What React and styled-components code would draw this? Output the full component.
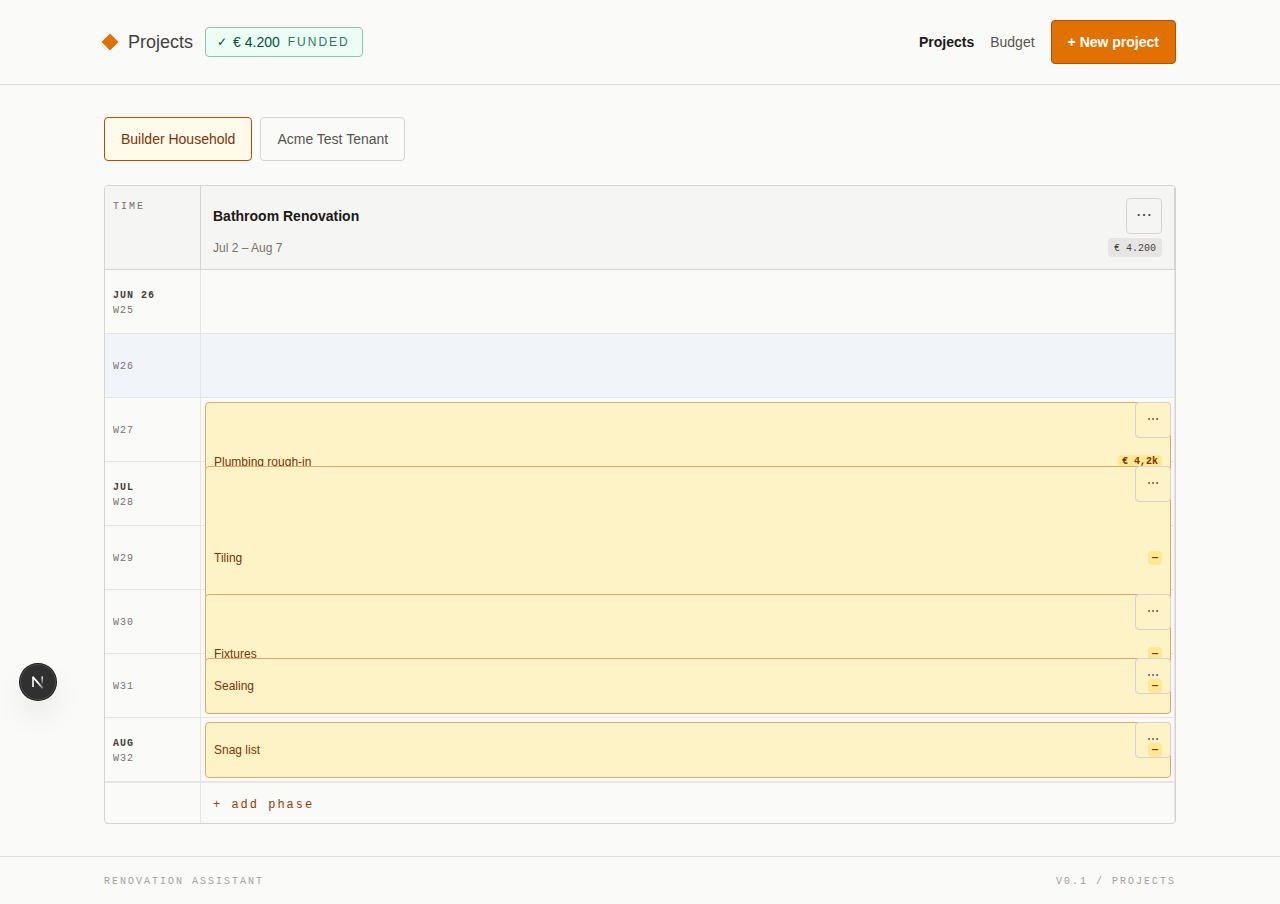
import styled, { createGlobalStyle } from 'styled-components';

const SANS = "'Liberation Sans', Arial, sans-serif";
const MONO = "'Liberation Mono', 'Courier New', monospace";

const colors = {
  page: '#fafaf9',
  panel: '#f5f5f4',
  line: '#e7e5e4',
  lineOuter: '#dfdedc',
  lineStrong: '#d6d3d1',
  ink: '#1c1917',
  text: '#44403b',
  muted: '#57534d',
  soft: '#79716b',
  faint: '#a6a09b',
  accent: '#e17100',
  accentDark: '#bb4d00',
  brown: '#7b3306',
};

const WEEKS = [
  { week: 'W25', month: 'JUN 26' },
  { week: 'W26', current: true },
  { week: 'W27' },
  { week: 'W28', month: 'JUL' },
  { week: 'W29' },
  { week: 'W30' },
  { week: 'W31' },
  { week: 'W32', month: 'AUG' },
];

const PHASES = [
  { name: 'Plumbing rough-in', start: 2, span: 2, cost: '€ 4,2k' },
  { name: 'Tiling', start: 3, span: 3, cost: '—' },
  { name: 'Fixtures', start: 5, span: 2, cost: '—' },
  { name: 'Sealing', start: 6, span: 1, cost: '—' },
  { name: 'Snag list', start: 7, span: 1, cost: '—' },
];

const GlobalStyle = createGlobalStyle`
  *, *::before, *::after {
    box-sizing: border-box;
  }

  body {
    margin: 0;
    background-color: ${colors.page};
    color: ${colors.ink};
    font-family: ${SANS};
    font-size: 14px;
    line-height: 20px;
  }

  h1, h2, p {
    margin: 0;
  }

  button {
    font: inherit;
    cursor: pointer;
  }
`;

const Page = styled.div`
  display: flex;
  flex-direction: column;
  min-height: 100vh;
`;

const Container = styled.div`
  width: 100%;
  max-width: 1120px;
  margin: 0 auto;
  padding: 0 24px;
`;

const Header = styled.header`
  border-bottom: 1px solid ${colors.lineOuter};
  padding: 20px 0;
`;

const HeaderRow = styled(Container)`
  display: flex;
  align-items: center;
  justify-content: space-between;
  gap: 16px;
`;

const Brand = styled.div`
  display: flex;
  align-items: center;
  gap: 12px;
`;

const Diamond = styled.span`
  width: 12px;
  height: 12px;
  background-color: ${colors.accent};
  transform: rotate(45deg);
`;

const Title = styled.h1`
  font-size: 18px;
  font-weight: 400;
  line-height: 28px;
  color: ${colors.text};
`;

const FundedPill = styled.div`
  display: flex;
  align-items: center;
  gap: 8px;
  padding: 4px 12px 4px 11px;
  border: 1px solid #86c9ae;
  border-radius: 4px;
  background-color: #ecfdf5;
  color: #004f3b;
`;

const FundedAmount = styled.span`
  display: flex;
  gap: 6px;
`;

const Check = styled.span`
  font-size: 12px;
`;

const FundedLabel = styled.span`
  font-size: 12px;
  letter-spacing: 2px;
  color: #33735f;
`;

const Nav = styled.nav`
  display: flex;
  align-items: center;
  gap: 16px;
`;

const NavLink = styled.a`
  color: ${({ $active }) => ($active ? colors.ink : colors.muted)};
  font-weight: ${({ $active }) => ($active ? 700 : 400)};
  text-decoration: none;
`;

const NewProjectButton = styled.button`
  height: 44px;
  padding: 0 16px;
  border: 1px solid ${colors.accentDark};
  border-radius: 4px;
  background-color: ${colors.accent};
  color: #fff;
  font-weight: 700;
`;

const Main = styled.main`
  flex: 1;
  padding: 32px 0;
`;

const Tenants = styled.div`
  display: flex;
  gap: 8px;
  margin-bottom: 24px;
`;

const TenantButton = styled.button`
  height: 44px;
  padding: 0 16px;
  border: 1px solid ${({ $active }) => ($active ? colors.accentDark : colors.lineStrong)};
  border-radius: 4px;
  background-color: ${({ $active }) => ($active ? '#fffbeb' : 'transparent')};
  color: ${({ $active }) => ($active ? colors.brown : colors.muted)};
`;

const Timeline = styled.section`
  display: grid;
  grid-template-columns: 96px 1fr;
  grid-template-rows: auto repeat(${WEEKS.length}, 64px) auto;
  border: 1px solid ${colors.lineStrong};
  border-radius: 4px;
  overflow: hidden;
`;

const TimeHead = styled.div`
  padding: 12px 8px;
  border-right: 1px solid ${colors.lineStrong};
  border-bottom: 1px solid ${colors.lineStrong};
  background-color: ${colors.panel};
  color: ${colors.soft};
  font-family: ${MONO};
  font-size: 10px;
  line-height: 18px;
  letter-spacing: 2px;
`;

const ProjectHead = styled.div`
  display: flex;
  flex-direction: column;
  gap: 4px;
  padding: 12px;
  border-right: 1px solid ${colors.lineStrong};
  border-bottom: 1px solid ${colors.lineStrong};
  background-color: ${colors.panel};
`;

const HeadLine = styled.div`
  display: flex;
  align-items: center;
  justify-content: space-between;
`;

const ProjectName = styled.h2`
  font-size: 14px;
  font-weight: 700;
`;

const ProjectDates = styled.p`
  font-size: 12px;
  line-height: 16px;
  color: ${colors.soft};
`;

const ProjectCost = styled.span`
  padding: 3px 6px 1px;
  border-radius: 4px;
  background-color: ${colors.line};
  color: ${colors.text};
  font-family: ${MONO};
  font-size: 10px;
  line-height: 15px;
`;

const MenuButton = styled.button`
  display: grid;
  place-items: center;
  width: 36px;
  height: 36px;
  padding: 0 0 2px;
  border: 1px solid ${colors.lineStrong};
  border-radius: 4px;
  background-color: transparent;
  color: ${colors.text};

  && {
    font-size: ${({ $small }) => ($small ? '12px' : '16px')};
  }
`;

const WeekCell = styled.div`
  grid-column: 1;
  grid-row: ${({ $row }) => $row + 2};
  display: flex;
  flex-direction: column;
  justify-content: center;
  padding: 2px 8px 0;
  border-right: 1px solid ${colors.line};
  border-bottom: 1px solid ${colors.line};
  background-color: ${({ $current }) => ($current ? '#f1f4f9' : 'transparent')};
  color: ${colors.soft};
  font-family: ${MONO};
  font-size: 10px;
  line-height: 15px;
  letter-spacing: 1px;
`;

const Month = styled.span`
  color: ${colors.text};
  font-weight: 700;
`;

const SlotCell = styled.div`
  grid-column: 2;
  grid-row: ${({ $row }) => $row + 2};
  border-right: 1px solid ${colors.line};
  border-bottom: 1px solid ${colors.line};
  background-color: ${({ $current }) => ($current ? '#f1f4f9' : 'transparent')};
`;

const Phase = styled.article`
  position: relative;
  grid-column: 2;
  grid-row: ${({ $start, $span }) => `${$start + 2} / span ${$span}`};
  display: flex;
  align-items: center;
  justify-content: space-between;
  margin: 4px;
  padding: 0 8px;
  border: 1px solid #e3ab6b;
  border-radius: 4px;
  background-color: #fef3c6;
  color: ${colors.brown};
  font-size: 12px;
  line-height: 16px;
`;

const PhaseMenu = styled(MenuButton)`
  position: absolute;
  top: -1px;
  right: -1px;
  background-color: #fef3c6;
`;

const PhaseCost = styled.span`
  position: relative;
  padding: 0 4px;
  border-radius: 4px;
  background-color: #ffe892;
  font-family: ${MONO};
  font-size: 10px;
  font-weight: 700;
  line-height: 14px;
`;

const AddRowLabel = styled.div`
  border-top: 1px solid ${colors.line};
  border-right: 1px solid ${colors.line};
`;

const AddRow = styled.div`
  border-top: 1px solid ${colors.line};
  border-right: 1px solid ${colors.line};
`;

const AddPhaseButton = styled.button`
  height: 40px;
  padding: 3px 12px 0;
  border: 0;
  background: none;
  color: #973c00;

  && {
    font-family: ${MONO};
    font-size: 12px;
    letter-spacing: 2px;
  }
`;

const Footer = styled.footer`
  border-top: 1px solid ${colors.lineOuter};
  padding: 17px 0 15px;
`;

const FooterRow = styled(Container)`
  display: flex;
  justify-content: space-between;
  color: ${colors.faint};
  font-family: ${MONO};
  font-size: 10px;
  line-height: 15px;
  letter-spacing: 2px;
`;

const DevBadge = styled.button`
  position: fixed;
  left: 20px;
  bottom: 204px;
  display: grid;
  place-items: center;
  width: 36px;
  height: 36px;
  padding: 0;
  border: 0;
  border-radius: 50%;
  background-color: #303030;
  box-shadow:
    0 0 0 1px #171717,
    inset 0 0 0 1px #4a4a4a,
    0 16px 32px -8px rgba(0, 0, 0, 0.24);
`;

const NextMark = () => (
  <svg width="14" height="14" viewBox="0 0 14 14" fill="none" aria-hidden="true">
    <defs>
      <linearGradient id="diagonal" x1="8" y1="8" x2="12" y2="13" gradientUnits="userSpaceOnUse">
        <stop stopColor="#fff" />
        <stop offset="1" stopColor="#fff" stopOpacity="0.3" />
      </linearGradient>
      <linearGradient id="stem" x1="11" y1="1" x2="11" y2="10" gradientUnits="userSpaceOnUse">
        <stop stopColor="#fff" />
        <stop offset="1" stopColor="#fff" stopOpacity="0" />
      </linearGradient>
    </defs>
    <path d="M2 2L11.8 13.4" stroke="url(#diagonal)" strokeWidth="1.8" />
    <path d="M2 12V1.4" stroke="#fff" strokeWidth="1.6" />
    <path d="M11.2 1.4V10" stroke="url(#stem)" strokeWidth="1.6" />
  </svg>
);

const App = () => (
  <>
    <GlobalStyle />
    <Page>
      <Header>
        <HeaderRow>
          <Brand>
            <Diamond />
            <Title>Projects</Title>
            <FundedPill>
              <FundedAmount>
                <Check>✓</Check>
                <span>€ 4.200</span>
              </FundedAmount>
              <FundedLabel>FUNDED</FundedLabel>
            </FundedPill>
          </Brand>
          <Nav>
            <NavLink href="#projects" $active>
              Projects
            </NavLink>
            <NavLink href="#budget">Budget</NavLink>
            <NewProjectButton type="button">+ New project</NewProjectButton>
          </Nav>
        </HeaderRow>
      </Header>

      <Main>
        <Container>
          <Tenants>
            <TenantButton type="button" $active>
              Builder Household
            </TenantButton>
            <TenantButton type="button">Acme Test Tenant</TenantButton>
          </Tenants>

          <Timeline>
            <TimeHead>TIME</TimeHead>
            <ProjectHead>
              <HeadLine>
                <ProjectName>Bathroom Renovation</ProjectName>
                <MenuButton type="button">⋯</MenuButton>
              </HeadLine>
              <HeadLine>
                <ProjectDates>Jul 2 – Aug 7</ProjectDates>
                <ProjectCost>€ 4.200</ProjectCost>
              </HeadLine>
            </ProjectHead>

            {WEEKS.map(({ week, month, current }, i) => (
              <WeekCell key={week} $row={i} $current={current}>
                {month && <Month>{month}</Month>}
                <span>{week}</span>
              </WeekCell>
            ))}
            {WEEKS.map(({ week, current }, i) => (
              <SlotCell key={week} $row={i} $current={current} />
            ))}

            {PHASES.map(({ name, start, span, cost }) => (
              <Phase key={name} $start={start} $span={span}>
                <PhaseMenu type="button" $small>
                  ⋯
                </PhaseMenu>
                <span>{name}</span>
                <PhaseCost>{cost}</PhaseCost>
              </Phase>
            ))}

            <AddRowLabel />
            <AddRow>
              <AddPhaseButton type="button">+ add phase</AddPhaseButton>
            </AddRow>
          </Timeline>
        </Container>
      </Main>

      <Footer>
        <FooterRow>
          <span>RENOVATION ASSISTANT</span>
          <span>V0.1 / PROJECTS</span>
        </FooterRow>
      </Footer>
    </Page>

    <DevBadge type="button">
      <NextMark />
    </DevBadge>
  </>
);

export default App;
